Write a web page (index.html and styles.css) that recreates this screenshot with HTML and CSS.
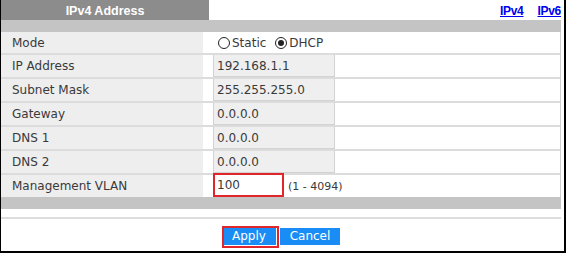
FILE: index.html
```html
<!DOCTYPE html>
<html>
<head>
<meta charset="utf-8">
<link rel="stylesheet" href="styles.css">
</head>
<body>
<div class="frame">
  <div class="topbar">
    <div class="tab">IPv4 Address</div>
    <div class="links"><a href="#">IPv4</a><a href="#">IPv6</a></div>
  </div>
  <div class="panel">
    <div class="bar"></div>
    <div class="rows">
      <div class="row first">
        <div class="label">Mode</div>
        <div class="value">
          <span class="radio"><span class="circle"></span>Static</span>
          <span class="radio"><span class="circle on"></span>DHCP</span>
        </div>
      </div>
      <div class="row">
        <div class="label">IP Address</div>
        <div class="value"><div class="field">192.168.1.1</div></div>
      </div>
      <div class="row">
        <div class="label">Subnet Mask</div>
        <div class="value"><div class="field">255.255.255.0</div></div>
      </div>
      <div class="row">
        <div class="label">Gateway</div>
        <div class="value"><div class="field">0.0.0.0</div></div>
      </div>
      <div class="row">
        <div class="label">DNS 1</div>
        <div class="value"><div class="field">0.0.0.0</div></div>
      </div>
      <div class="row">
        <div class="label">DNS 2</div>
        <div class="value"><div class="field">0.0.0.0</div></div>
      </div>
      <div class="row">
        <div class="label">Management VLAN</div>
        <div class="value"><div class="vlan">100</div><span class="range">(1 - 4094)</span></div>
      </div>
    </div>
    <div class="bar"></div>
  </div>
  <div class="sep"></div>
  <div class="actions">
    <button class="btn apply">Apply</button>
    <button class="btn cancel">Cancel</button>
  </div>
</div>
</body>
</html>
```

FILE: styles.css
```css
html, body {
  margin: 0;
  padding: 0;
  background: #fff;
}
.frame {
  width: 566px;
  height: 253px;
  box-sizing: border-box;
  border-left: 1px solid #000;
  border-right: 2px solid #000;
  border-bottom: 2px solid #000;
  font-family: "DejaVu Sans", sans-serif;
  font-size: 12px;
  color: #3a3a3a;
}
.topbar {
  display: flex;
  justify-content: space-between;
  height: 20px;
}
.tab {
  width: 208px;
  height: 20px;
  box-sizing: border-box;
  padding-top: 3px;
  background: #8c8c8c;
  color: #fff;
  font-family: "Liberation Sans", Arial, sans-serif;
  font-weight: bold;
  font-size: 12.5px;
  text-align: center;
  line-height: 17px;
}
.links {
  display: flex;
  gap: 14px;
  padding-right: 3px;
  line-height: 23px;
  height: 20px;
  font-family: "Liberation Sans", Arial, sans-serif;
  font-size: 12px;
  letter-spacing: -0.3px;
}
.links a {
  color: #0000ee;
  font-weight: bold;
  text-decoration: underline;
}
.panel {
  width: 560px;
}
.bar {
  height: 12px;
  background: #c4c4c4;
}
.rows {
  border-right: 1px solid #cfcfcf;
}
.row {
  display: flex;
  height: 22px;
  border-top: 2px solid #dcdcdc;
}
.row.first {
  border-top: 0;
  height: 21px;
}
.label {
  width: 202px;
  box-sizing: border-box;
  background: #eeeeee;
  padding-left: 11px;
  display: flex;
  align-items: center;
}
.value {
  flex: 1;
  padding-left: 10px;
  display: flex;
  align-items: center;
}
.field {
  width: 122px;
  height: 22px;
  box-sizing: border-box;
  background: #efefef;
  border: 1px solid #d2d2d2;
  border-top: 0;
  padding-left: 3px;
  display: flex;
  align-items: center;
}
.radio {
  display: flex;
  align-items: center;
  margin-left: 5px;
  margin-right: 4px;
}
.circle {
  width: 12px;
  height: 12px;
  box-sizing: border-box;
  border: 1px solid #222;
  border-radius: 50%;
  margin-right: 2px;
  display: flex;
  align-items: center;
  justify-content: center;
}
.circle.on::after {
  content: "";
  width: 6px;
  height: 6px;
  border-radius: 50%;
  background: #222;
}
.vlan {
  width: 71px;
  height: 24px;
  margin-top: -2px;
  box-sizing: border-box;
  border: 2px solid #e0262b;
  background: #fff;
  padding-left: 2px;
  display: flex;
  align-items: center;
  align-self: flex-start;
}
.range {
  margin-left: 4px;
  font-size: 11px;
}
.sep {
  width: 560px;
  height: 2px;
  margin-top: 8px;
  background: #dddddd;
}
.actions {
  width: 560px;
  display: flex;
  justify-content: center;
  align-items: flex-start;
  gap: 1px;
  margin-top: 7px;
}
.btn {
  font-family: "DejaVu Sans", sans-serif;
  font-size: 12px;
  color: #fff;
  background: #1a8cf5;
  border: 0;
  padding: 0;
  margin: 0;
  height: 17px;
  line-height: 17px;
}
.apply {
  width: 57px;
  height: 22px;
  border: 2px solid #e0262b;
  background: linear-gradient(#1a8cf5, #1a8cf5) 0 0 / 52px 17px no-repeat, #fff;
  padding-right: 3px;
  padding-bottom: 1px;
  box-sizing: border-box;
}
.cancel {
  width: 60px;
  margin-top: 2px;
}
```
